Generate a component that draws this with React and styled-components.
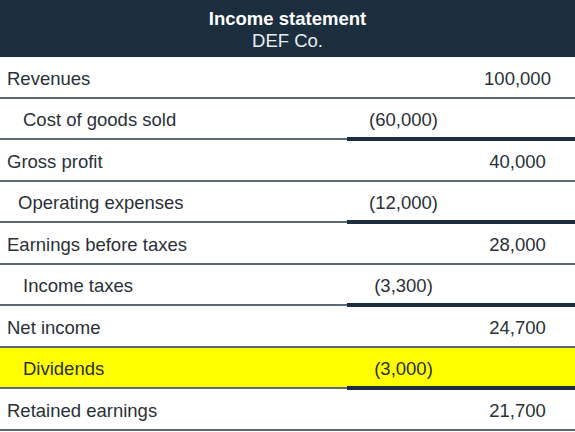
import React from "react";
import styled, { createGlobalStyle } from "styled-components";

const Global = createGlobalStyle`
  html, body { margin: 0; padding: 0; background: #ffffff; }
  body { font-family: "Liberation Sans", Arial, sans-serif; }
`;

const Sheet = styled.div`
  width: 575px;
  display: flex;
  flex-direction: column;
  color: #2a3037;
  font-size: 18.5px;
`;

const Header = styled.header`
  height: 57px;
  box-sizing: border-box;
  background: #1c2e3e;
  display: flex;
  flex-direction: column;
  align-items: center;
  justify-content: center;
  line-height: 22px;
  padding-top: 2px;
`;

const Title = styled.div`
  color: #ffffff;
  font-weight: bold;
`;

const Subtitle = styled.div`
  color: #e8edf0;
`;

const Row = styled.div`
  display: grid;
  grid-template-columns: 347px 113px 115px;
  height: 41.5px;
  background: ${(p) => (p.$highlight ? "#ffff00" : "transparent")};
`;

const Cell = styled.div`
  display: flex;
  align-items: center;
  box-sizing: border-box;
  border-bottom: 2px solid #5b6872;
  padding-top: 4px;
`;

const Label = styled(Cell)`
  padding-left: ${(p) => (p.$indent ? p.$indent : 7)}px;
`;

const Amount = styled(Cell)`
  justify-content: center;
  ${(p) =>
    p.$thick &&
    `
    border-bottom: 4px solid #1c2e3e;
    margin-bottom: -1px;
  `}
`;

const rows = [
  { label: "Revenues", right: "100,000" },
  { label: "Cost of goods sold", indent: 23, mid: "(60,000)", thick: true },
  { label: "Gross profit", right: "40,000" },
  { label: "Operating expenses", indent: 18, mid: "(12,000)", thick: true },
  { label: "Earnings before taxes", right: "28,000" },
  { label: "Income taxes", indent: 23, mid: "(3,300)", thick: true },
  { label: "Net income", right: "24,700" },
  { label: "Dividends", indent: 23, mid: "(3,000)", thick: true, highlight: true },
  { label: "Retained earnings", right: "21,700" },
];

export default function App() {
  return (
    <>
      <Global />
      <Sheet>
        <Header>
          <Title>Income statement</Title>
          <Subtitle>DEF Co.</Subtitle>
        </Header>
        {rows.map((r) => (
          <Row key={r.label} $highlight={r.highlight}>
            <Label $indent={r.indent}>{r.label}</Label>
            <Amount $thick={r.thick}>{r.mid || ""}</Amount>
            <Amount $thick={r.thick}>{r.right || ""}</Amount>
          </Row>
        ))}
      </Sheet>
    </>
  );
}
